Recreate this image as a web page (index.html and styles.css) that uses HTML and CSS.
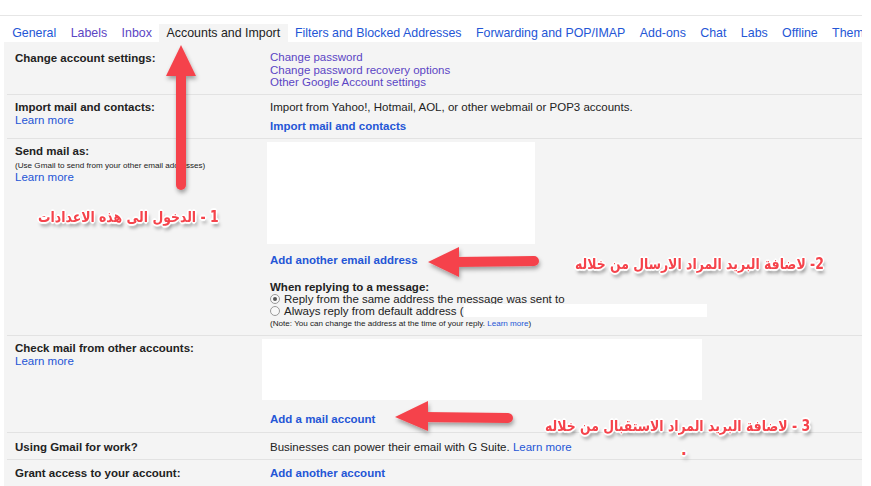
FILE: index.html
```html
<!DOCTYPE html>
<html lang="en">
<head>
<meta charset="UTF-8">
<meta name="viewport" content="width=device-width, initial-scale=1.0">
<title>Settings - Accounts and Import</title>
<link rel="stylesheet" href="styles.css">
</head>
<body>
<div class="page">
  <!-- Settings tabs -->
  <nav class="tabs">
    <a class="tab" href="#">General</a>
    <a class="tab visited" href="#">Labels</a>
    <a class="tab visited" href="#">Inbox</a>
    <span class="tab active">Accounts and Import</span>
    <a class="tab" href="#">Filters and Blocked Addresses</a>
    <a class="tab" href="#">Forwarding and POP/IMAP</a>
    <a class="tab" href="#">Add-ons</a>
    <a class="tab" href="#">Chat</a>
    <a class="tab" href="#">Labs</a>
    <a class="tab" href="#">Offline</a>
    <a class="tab" href="#">Themes</a>
  </nav>

  <div class="panel">
    <div class="row row-account">
      <div class="label">Change account settings:</div>
      <div class="value links">
        <a class="visited" href="#">Change password</a>
        <a class="visited" href="#">Change password recovery options</a>
        <a class="visited" href="#">Other Google Account settings</a>
      </div>
    </div>

    <div class="row row-import">
      <div class="label">Import mail and contacts:<a class="learn" href="#">Learn more</a></div>
      <div class="value">
        <div>Import from Yahoo!, Hotmail, AOL, or other webmail or POP3 accounts.</div>
        <a class="action" href="#">Import mail and contacts</a>
      </div>
    </div>

    <div class="row row-send">
      <div class="label">
        Send mail as:
        <small class="hint">(Use Gmail to send from your other email addresses)</small>
        <a class="learn" href="#">Learn more</a>
      </div>
      <div class="value">
        <div class="blank blank-send"></div>
        <a class="action add-address" href="#">Add another email address</a>
        <div class="reply">
          <div class="reply-title">When replying to a message:</div>
          <label class="radio"><span class="dot checked"></span>Reply from the same address the message was sent to</label>
          <label class="radio"><span class="dot"></span>Always reply from default address (<span class="blank blank-inline"></span></label>
          <small class="hint">(Note: You can change the address at the time of your reply. <a href="#">Learn more</a>)</small>
        </div>
      </div>
    </div>

    <div class="row row-check">
      <div class="label">Check mail from other accounts:<a class="learn" href="#">Learn more</a></div>
      <div class="value">
        <div class="blank blank-check"></div>
        <a class="action add-account" href="#">Add a mail account</a>
      </div>
    </div>

    <div class="row row-work">
      <div class="label">Using Gmail for work?</div>
      <div class="value">Businesses can power their email with G Suite. <a href="#">Learn more</a></div>
    </div>

    <div class="row row-grant">
      <div class="label">Grant access to your account:</div>
      <div class="value"><a class="action" href="#">Add another account</a></div>
    </div>
  </div>

  <!-- Annotations drawn over the screenshot -->
  <svg class="arrows" width="871" height="486" viewBox="0 0 871 486">
    <defs>
      <filter id="shade" x="-20%" y="-20%" width="140%" height="140%">
        <feDropShadow dx="1" dy="3" stdDeviation="2" flood-color="#000" flood-opacity="0.35"/>
      </filter>
    </defs>
    <g fill="#f5434b" stroke="#f5434b" filter="url(#shade)">
      <line x1="181" y1="72" x2="181" y2="185" stroke-width="10" stroke-linecap="round"/>
      <polygon points="181,45 196,76 166,76" stroke="none"/>

      <line x1="456" y1="262" x2="534" y2="261" stroke-width="10" stroke-linecap="round"/>
      <polygon points="428,262 459,247 459,277" stroke="none"/>

      <line x1="424" y1="417" x2="508" y2="418" stroke-width="10" stroke-linecap="round"/>
      <polygon points="395,417 428,401 428,431" stroke="none"/>
    </g>
  </svg>

  <div class="note note-1" dir="rtl">1 - الدخول الى هذه الاعدادات</div>
  <div class="note note-2" dir="rtl">2- لاضافة البريد المراد الارسال من خلاله</div>
  <div class="note note-3" dir="rtl">3 - لاضافة البريد المراد الاستقبال من خلاله</div>
  <div class="note note-dot">.</div>
</div>
</body>
</html>
```

FILE: styles.css
```css
:root {
  --panel-bg: #f4f4f4;
  --rule: #e2e2e2;
  --link: #2456d6;
  --visited: #5b45c4;
  --text: #222;
  --note-red: #f5434b;
}

body {
  margin: 0;
  padding: 0;
  background: #fff;
  font-family: "Liberation Sans", Arial, sans-serif;
  color: var(--text);
}

a {
  color: var(--link);
  text-decoration: none;
}

a.visited {
  color: var(--visited);
}

.page {
  position: relative;
  width: 871px;
  height: 486px;
  overflow: hidden;
  padding-top: 15px;
  box-sizing: border-box;
}

/* Tabs */
.tabs {
  width: 862px;
  border-top: 1px solid #e6e6e6;
  padding: 8px 0 0 5px;
  box-sizing: border-box;
  white-space: nowrap;
  overflow: hidden;
  display: flex;
}

.tab {
  display: block;
  padding: 0 7.2px;
  height: 18px;
  line-height: 18px;
  font-size: 12.4px;
  color: var(--link);
}

.tab.visited {
  color: var(--visited);
}

.tab.active {
  background: var(--panel-bg);
  color: #222;
  padding: 0 7.5px;
}

/* Settings panel */
.panel {
  margin-left: 4px;
  width: 858px;
  height: 460px;
  background: var(--panel-bg);
  font-size: 11.5px;
  line-height: 12.5px;
}

.row {
  display: grid;
  grid-template-columns: 255px 1fr;
  margin-left: 3px;
  border-bottom: 1px solid var(--rule);
}

.label {
  font-weight: bold;
  padding-left: 8px;
  display: flex;
  flex-direction: column;
  align-items: flex-start;
}

.value {
  padding-left: 8px;
}

.links {
  display: flex;
  flex-direction: column;
  align-items: flex-start;
}

.learn {
  font-weight: normal;
  font-size: 11.5px;
}

.action {
  font-weight: bold;
  display: inline-block;
}

.hint {
  font-weight: normal;
  font-size: 8.1px;
  line-height: 11px;
  display: block;
  color: #222;
}

.blank {
  background: #fff;
}

/* Row specifics */
.row-account {
  padding: 9px 0 7px;
  height: 53px;
  box-sizing: border-box;
}

.row-account .label {
  line-height: 14px;
}

.row-import {
  padding-top: 6px;
  height: 44px;
  box-sizing: border-box;
}

.row-import .action {
  margin-top: 6px;
}

.row-send {
  height: 197px;
  box-sizing: border-box;
}

.row-send .label {
  padding-top: 6px;
}

.row-send .hint {
  margin-top: 2px;
}

.blank-send {
  width: 268px;
  height: 102px;
  margin: 3px 0 0 -3px;
}

.add-address {
  margin-top: 10px;
}

.reply {
  margin-top: 14px;
  font-size: 11.5px;
  line-height: 12px;
}

.reply-title {
  font-weight: bold;
}

.radio {
  display: flex;
  align-items: center;
  height: 12px;
}

.dot {
  width: 8px;
  height: 8px;
  border: 1px solid #9a9a9a;
  border-radius: 50%;
  background: #f8f8f8;
  margin-right: 4px;
  position: relative;
}

.dot.checked::after {
  content: "";
  position: absolute;
  left: 2px;
  top: 2px;
  width: 4px;
  height: 4px;
  border-radius: 50%;
  background: #555;
}

.blank-inline {
  display: inline-block;
  width: 243px;
  height: 13px;
}

.reply .hint {
  margin-top: 1px;
}

.row-check {
  height: 97px;
  box-sizing: border-box;
}

.row-check .label {
  padding-top: 6px;
}

.row-check .value {
  padding-left: 0;
}

.blank-check {
  width: 440px;
  height: 61px;
  margin-top: 3px;
}

.add-account {
  margin: 13px 0 0 8px;
}

.row-work {
  height: 27px;
  padding-top: 8px;
  box-sizing: border-box;
}

.row-grant {
  border-bottom: none;
  padding-top: 7px;
}

/* Annotations */
.arrows {
  position: absolute;
  left: 0;
  top: 0;
  pointer-events: none;
}

.note {
  position: absolute;
  font-family: "DejaVu Sans", sans-serif;
  font-weight: bold;
  font-size: 15px;
  line-height: 20px;
  color: var(--note-red);
  white-space: nowrap;
  transform: scaleX(0.83);
  transform-origin: left center;
  text-shadow:
    1px 0 0 #fff, -1px 0 0 #fff, 0 1px 0 #fff, 0 -1px 0 #fff,
    2px 0 1px #fff, -2px 0 1px #fff, 0 2px 1px #fff, 0 -2px 1px #fff,
    1px 1px 1px #fff, -1px -1px 1px #fff, 1px -1px 1px #fff, -1px 1px 1px #fff,
    2px 4px 4px rgba(0, 0, 0, 0.45);
}

.note-1 {
  left: 38px;
  top: 207px;
}

.note-2 {
  left: 575px;
  top: 254px;
}

.note-3 {
  left: 545px;
  top: 416px;
}

.note-dot {
  left: 681px;
  top: 440px;
  transform: none;
}
```
